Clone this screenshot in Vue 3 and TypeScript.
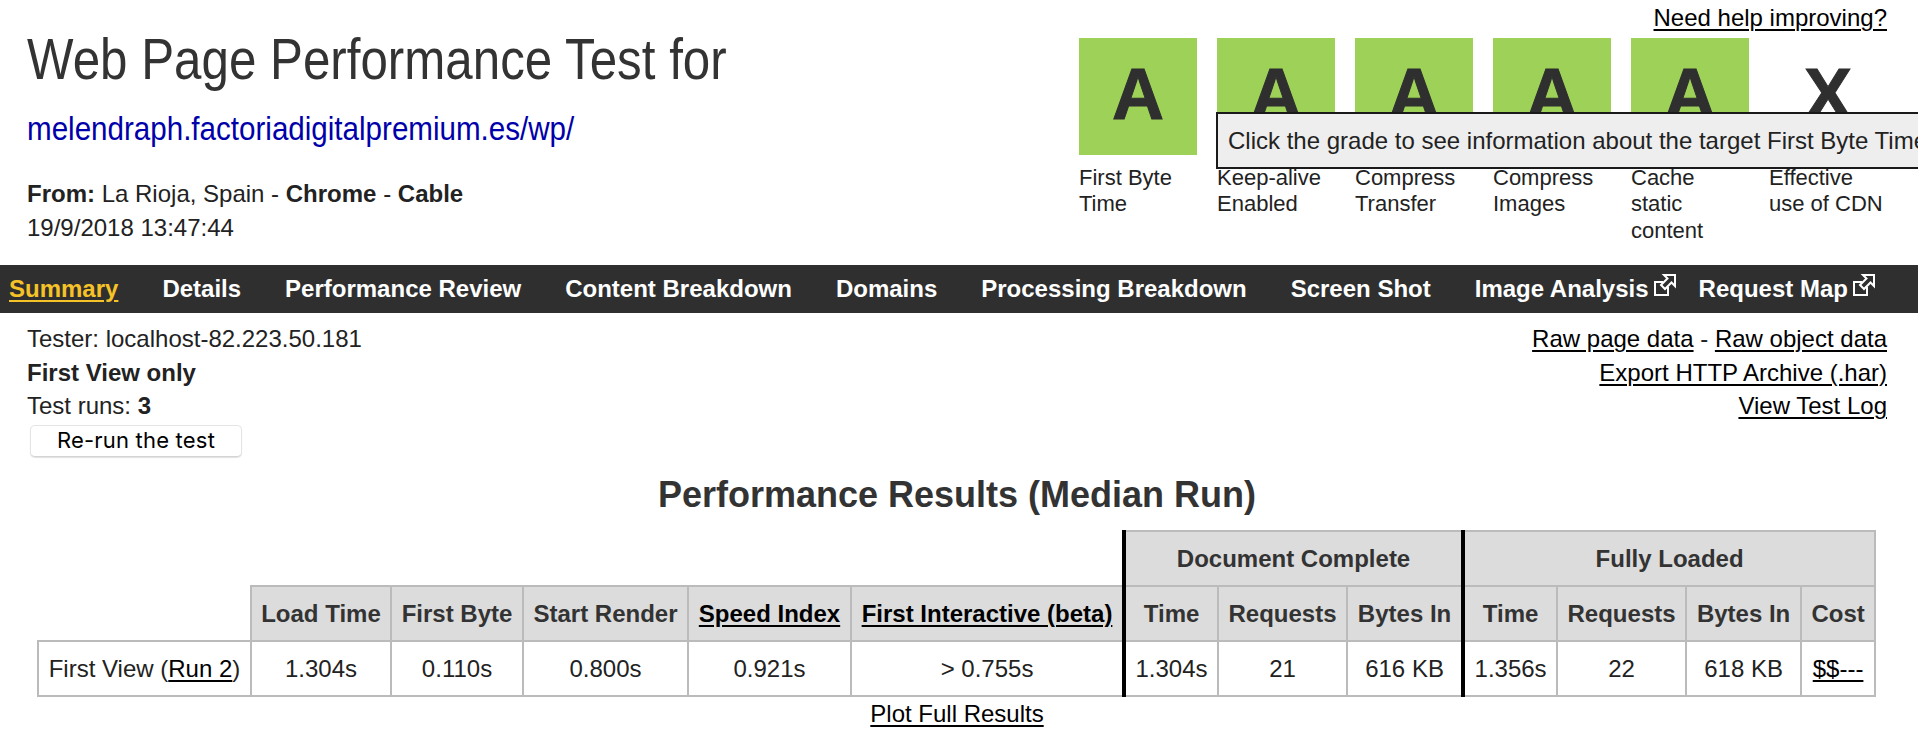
<script setup lang="ts">
interface Grade { letter: string; label: string[]; on: boolean }
const grades: Grade[] = [
  { letter: 'A', label: ['First Byte', 'Time'], on: true },
  { letter: 'A', label: ['Keep-alive', 'Enabled'], on: true },
  { letter: 'A', label: ['Compress', 'Transfer'], on: true },
  { letter: 'A', label: ['Compress', 'Images'], on: true },
  { letter: 'A', label: ['Cache', 'static', 'content'], on: true },
  { letter: 'X', label: ['Effective', 'use of CDN'], on: false },
]
const navItems = [
  { text: 'Summary', active: true },
  { text: 'Details' },
  { text: 'Performance Review' },
  { text: 'Content Breakdown' },
  { text: 'Domains' },
  { text: 'Processing Breakdown' },
  { text: 'Screen Shot' },
  { text: 'Image Analysis', ext: true },
  { text: 'Request Map', ext: true },
]
</script>

<template>
  <div class="page">
    <header class="head">
      <div class="head-left">
        <h1 class="title">Web Page Performance Test for</h1>
        <a class="url" href="#">melendraph.factoriadigitalpremium.es/wp/</a>
        <div class="from"><b>From:</b> La Rioja, Spain - <b>Chrome</b> - <b>Cable</b></div>
        <div class="date">19/9/2018 13:47:44</div>
      </div>
      <div class="head-right">
        <a class="help" href="#">Need help improving?</a>
        <div class="grades">
          <div v-for="(g, i) in grades" :key="i" class="grade">
            <div class="tile" :class="{ on: g.on }">{{ g.letter }}</div>
            <div class="label">
              <div v-for="l in g.label" :key="l">{{ l }}</div>
            </div>
          </div>
        </div>
        <div class="tooltip">Click the grade to see information about the target First Byte Time</div>
      </div>
    </header>

    <nav class="nav">
      <a v-for="n in navItems" :key="n.text" class="nav-item" :class="{ active: n.active }" href="#">
        <span class="nav-text">{{ n.text }}</span>
        <svg v-if="n.ext" class="ext" viewBox="4 4 22 22" width="22" height="22" fill="none" stroke="#fff" stroke-width="2">
          <path d="M13 12H5v13h13v-8" />
          <path d="M14 5h11v11l-3.500-3.500L15 19l-4-4 6.500-6.500z" />
        </svg>
      </a>
    </nav>

    <section class="info">
      <div>
        <div class="line">Tester: localhost-82.223.50.181</div>
        <div class="line"><b>First View only</b></div>
        <div class="line">Test runs: <b>3</b></div>
        <button class="rerun" type="button">Re-run the test</button>
      </div>
      <div class="info-right">
        <div class="line"><a href="#">Raw page data</a> - <a href="#">Raw object data</a></div>
        <div class="line"><a href="#">Export HTTP Archive (.har)</a></div>
        <div class="line"><a href="#">View Test Log</a></div>
      </div>
    </section>

    <h2 class="results-title">Performance Results (Median Run)</h2>

    <table class="results">
      <colgroup>
        <col style="width:213px" /><col style="width:140px" /><col style="width:132px" /><col style="width:165px" />
        <col style="width:163px" /><col style="width:273px" /><col style="width:94px" /><col style="width:129px" />
        <col style="width:116px" /><col style="width:94px" /><col style="width:129px" /><col style="width:115px" />
        <col style="width:74px" />
      </colgroup>
      <tbody>
        <tr>
          <th colspan="6" class="blank"></th>
          <th colspan="3" class="sep">Document Complete</th>
          <th colspan="4" class="sep">Fully Loaded</th>
        </tr>
        <tr>
          <th class="blank"></th>
          <th>Load Time</th>
          <th>First Byte</th>
          <th>Start Render</th>
          <th><a href="#">Speed Index</a></th>
          <th><a href="#">First Interactive (beta)</a></th>
          <th class="sep">Time</th>
          <th>Requests</th>
          <th>Bytes In</th>
          <th class="sep">Time</th>
          <th>Requests</th>
          <th>Bytes In</th>
          <th>Cost</th>
        </tr>
        <tr>
          <td>First View (<a href="#">Run 2</a>)</td>
          <td>1.304s</td>
          <td>0.110s</td>
          <td>0.800s</td>
          <td>0.921s</td>
          <td>&gt; 0.755s</td>
          <td class="sep">1.304s</td>
          <td>21</td>
          <td>616 KB</td>
          <td class="sep">1.356s</td>
          <td>22</td>
          <td>618 KB</td>
          <td><a href="#">$$---</a></td>
        </tr>
      </tbody>
    </table>

    <div class="plot"><a href="#">Plot Full Results</a></div>
  </div>
</template>

<style>
html, body { margin: 0; background: #fff; }
</style>

<style scoped>
.page {
  position: relative;
  width: 100%;
  height: 732px;
  overflow: hidden;
  font-family: "Liberation Sans", Arial, sans-serif;
  font-size: 24px;
  color: #222;
  background: #fff;
}
a { color: #000; text-decoration: underline; text-decoration-thickness: 2px; text-underline-offset: 3px; }
.head { display: flex; justify-content: space-between; height: 265px; box-sizing: border-box; padding: 0 31px 0 27px; }
.head-left { padding-top: 29px; }
.title { margin: 0; font-size: 58px; line-height: 60px; font-weight: 400; color: #333; white-space: nowrap; transform: scaleX(0.85); transform-origin: left center; width: 840px; }
.url { display: block; margin-top: 20px; font-size: 33px; line-height: 40px; color: #00a; text-decoration: none; white-space: nowrap; transform: scaleX(0.896); transform-origin: left center; }
.from { margin-top: 28px; line-height: 33.500px; }
.date { line-height: 33.500px; }
.head-right { position: relative; width: 808px; display: flex; flex-direction: column; align-items: flex-end; }
.help { font-size: 24px; line-height: 30px; margin-top: 3px; }
.grades { display: flex; gap: 20px; margin-top: 5px; width: 808px; }
.grade { width: 118px; }
.tile { height: 117px; box-sizing: border-box; padding-bottom: 6px; display: flex; align-items: center; justify-content: center; font-size: 72px; font-weight: 700; color: #2f2f2f; line-height: 1; -webkit-text-stroke: 1px #2f2f2f; }
.tile.on { background: #9dd157; }
.label { margin-top: 10px; font-size: 22px; line-height: 26.300px; color: #222; white-space: nowrap; }
.tooltip {
  position: absolute;
  left: 137px;
  top: 112px;
  height: 57px;
  box-sizing: border-box;
  border: 2px solid #1a1a1a;
  background: #eee;
  padding: 0 10px;
  font-size: 24px;
  line-height: 53px;
  white-space: nowrap;
  color: #222;
}
.nav { display: flex; align-items: center; gap: 44px; height: 48px; padding-left: 9px; background: #2f2f2f; }
.nav-item { display: flex; align-items: flex-start; gap: 5px; color: #fff; font-weight: 700; font-size: 24px; line-height: 48px; text-decoration: none; white-space: nowrap; }
.nav-item:nth-child(8) { margin-right: -21px; }
.nav-item.active { color: #f5c227; }
.nav-item.active .nav-text { text-decoration: underline; text-decoration-thickness: 2px; text-underline-offset: 3px; }
.ext { margin-top: 9px; }
.info { display: flex; justify-content: space-between; padding: 9px 31px 0 27px; }
.line { line-height: 33.500px; }
.info-right { text-align: right; }
.rerun {
  display: block;
  width: 212px;
  height: 32px;
  margin: 2.500px 0 0 3px;
  padding: 0 0 2px;
  background: #fff;
  border: 1px solid #e4e4e4;
  border-bottom-color: #d4d4d4;
  border-radius: 5px;
  box-shadow: 0 1px 1px rgba(0, 0, 0, 0.12);
  font-family: Inter, "Liberation Sans", sans-serif;
  font-size: 22px;
  letter-spacing: 0.2px;
  color: #000;
}
.results-title { margin: 15.500px 0 13.500px; font-size: 36px; line-height: 44px; font-weight: 700; text-align: center; color: #333; padding-right: 4px; }
.results { margin-left: 37px; width: 1837px; table-layout: fixed; border-collapse: collapse; }
.results th, .results td { height: 55px; padding: 0; border: 2px solid #bbb; text-align: center; box-sizing: border-box; white-space: nowrap; }
.results th { background: #dcdcdc; color: #333; font-weight: 700; }
.results th.blank { background: transparent; border: none; }
.results .sep { border-left: 4px solid #000; }
.plot { text-align: center; line-height: 34px; padding-right: 4px; }
</style>
